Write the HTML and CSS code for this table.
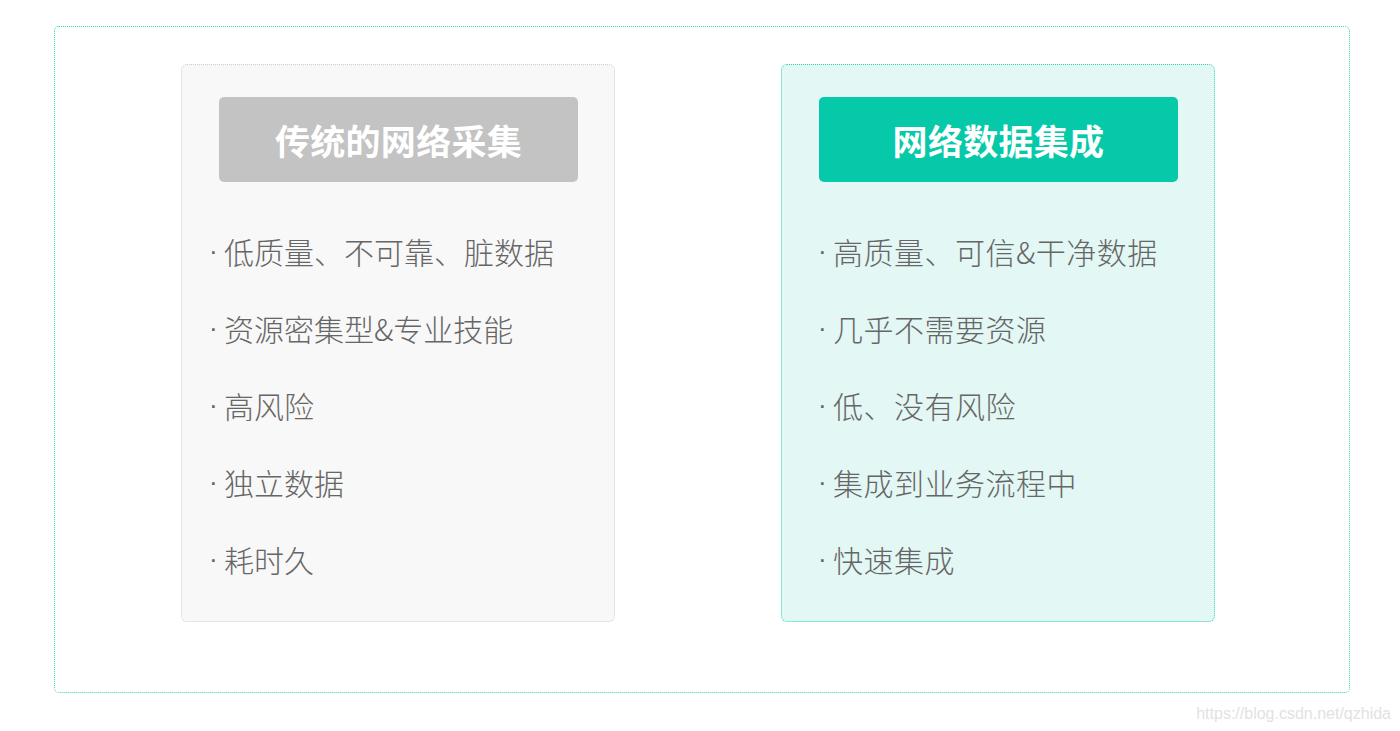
FILE: index.html
```html
<!DOCTYPE html>
<html lang="zh">
<head>
<meta charset="utf-8">
<title>网络数据集成</title>
<link rel="stylesheet" href="styles.css">
</head>
<body>
<div class="frame">
  <div class="card card-old">
    <div class="head head-old">传统的网络采集</div>
    <ul class="list">
      <li><span class="dot">·</span><span class="txt">低质量、不可靠、脏数据</span></li>
      <li><span class="dot">·</span><span class="txt">资源密集型&amp;专业技能</span></li>
      <li><span class="dot">·</span><span class="txt">高风险</span></li>
      <li><span class="dot">·</span><span class="txt">独立数据</span></li>
      <li><span class="dot">·</span><span class="txt">耗时久</span></li>
    </ul>
  </div>
  <div class="card card-new">
    <div class="head head-new">网络数据集成</div>
    <ul class="list list-new">
      <li><span class="dot">·</span><span class="txt">高质量、可信&amp;干净数据</span></li>
      <li><span class="dot">·</span><span class="txt">几乎不需要资源</span></li>
      <li><span class="dot">·</span><span class="txt">低、没有风险</span></li>
      <li><span class="dot">·</span><span class="txt">集成到业务流程中</span></li>
      <li><span class="dot">·</span><span class="txt">快速集成</span></li>
    </ul>
  </div>
</div>
<div class="watermark">https://blog.csdn.net/qzhida</div>
</body>
</html>
```

FILE: styles.css
```css
html, body {
  margin: 0;
  padding: 0;
  background: #ffffff;
  width: 1400px;
  height: 731px;
  overflow: hidden;
  font-family: "Noto Sans CJK SC", "Noto Sans", sans-serif;
}

body {
  position: relative;
  padding-top: 26px;
  box-sizing: border-box;
}

.frame {
  box-sizing: border-box;
  margin-left: 54px;
  width: 1296px;
  height: 667px;
  border: 1px dotted #2fd6b6;
  border-radius: 5px;
  display: flex;
  gap: 166px;
  padding: 37px 0 0 126px;
}

.card {
  box-sizing: border-box;
  width: 434px;
  height: 558px;
  border-radius: 6px;
  padding: 32px 0 0 37px;
}

.card-old {
  background: #f8f8f8;
  border: 1px dotted #cfcfcf;
}

.card-new {
  background: #e3f7f4;
  border: 1px dotted #2fd6b6;
}

.head {
  width: 359px;
  height: 85px;
  border-radius: 5px;
  color: #ffffff;
  font-weight: 700;
  font-size: 35px;
  display: flex;
  align-items: center;
  justify-content: center;
  letter-spacing: 0.3px;
}

.head-old {
  background: #c3c3c3;
}

.head-new {
  background: #05c9a8;
}

.list {
  list-style: none;
  margin: 30px 0 0 -10px;
  padding: 0;
}

.list-new {
  margin-left: -1px;
}

.list li {
  height: 77px;
  display: flex;
  align-items: center;
  white-space: nowrap;
  color: #666666;
}

.dot {
  width: 15px;
  flex: none;
  font-family: "Liberation Sans", Arial, sans-serif;
  font-size: 26px;
  line-height: 30px;
  text-align: left;
}

.txt {
  font-size: 30px;
  line-height: 40px;
  font-weight: 300;
}

.list-new .txt {
  letter-spacing: 0.5px;
}

.watermark {
  position: absolute;
  right: 9px;
  bottom: 8px;
  font-family: "Liberation Sans", Arial, sans-serif;
  font-size: 16px;
  color: #e2e2e2;
}
```
